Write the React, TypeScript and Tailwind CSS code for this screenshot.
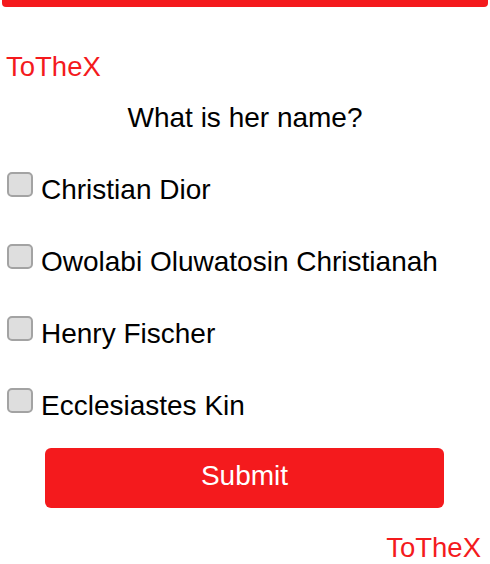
const options = [
  "Christian Dior",
  "Owolabi Oluwatosin Christianah",
  "Henry Fischer",
  "Ecclesiastes Kin",
];

export default function App() {
  return (
    <div className="w-[490px] h-[564px] bg-white text-black font-['Liberation_Sans',Arial,sans-serif] overflow-hidden">
      <div className="h-[7px] mx-[2px] bg-[#f41a1d] rounded-b-[4px]" />

      <div className="mt-[44px] pl-[6px] text-[27.5px] leading-[32px] text-[#f41a1d]">
        ToTheX
      </div>

      <h2 className="mt-[19px] text-center text-[28px] leading-[32px]">
        What is her name?
      </h2>

      <div className="mt-[38px] flex flex-col gap-[38px]">
        {options.map((name) => (
          <label key={name} className="flex items-start h-[34px]">
            <span className="ml-[7px] w-[26px] h-[25px] rounded-[5px] border-2 border-[#a3a3a3] bg-[#dedede]" />
            <span className="ml-[8px] mt-[2px] text-[28px] leading-[32px]">
              {name}
            </span>
          </label>
        ))}
      </div>

      <button className="mt-[26px] ml-[45px] w-[399px] h-[60px] rounded-[6px] bg-[#f41a1d] text-white text-[28px] leading-[32px] pb-[4px] flex items-center justify-center">
        Submit
      </button>

      <div className="mt-[25px] pr-[9px] text-right text-[27.5px] leading-[30px] text-[#f41a1d]">
        ToTheX
      </div>
    </div>
  );
}
